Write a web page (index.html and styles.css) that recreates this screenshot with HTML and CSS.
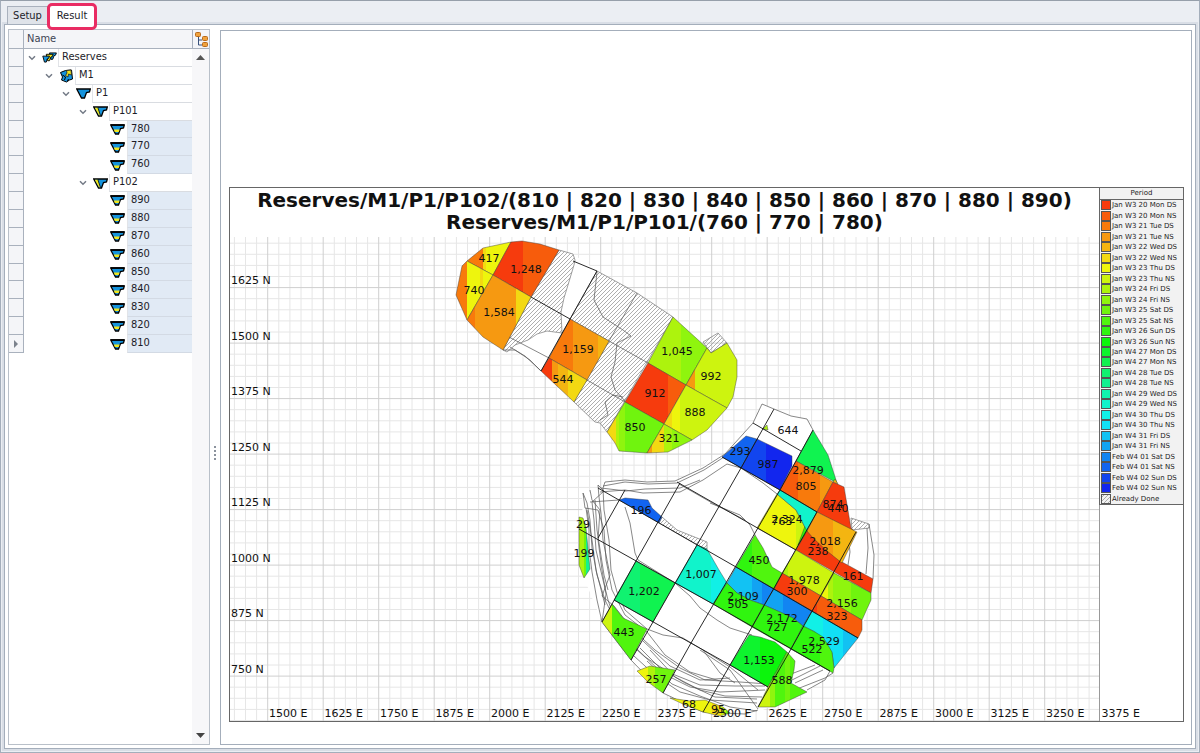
FILE: index.html
```html
<!DOCTYPE html>
<html lang="en">
<head>
<meta charset="utf-8">
<title>Reserves schedule result</title>
<link rel="stylesheet" href="styles.css">
</head>
<body>
<svg class="defs" aria-hidden="true">
  <symbol id="i-group" viewBox="0 0 16 12">
    <path d="M8 1h7.500l-1 2.500-1.500.500-1.500 4H9.500z" fill="#1593dc" stroke="#000"/>
    <path d="M4.500 2.500H12l-1 2.500-1.500.500L8 9.500H6z" fill="#f2e71c" stroke="#000"/>
    <path d="M.700 4.500H8l-1 2.500-1.500.500L4.500 11h-2z" fill="#1593dc" stroke="#000"/>
  </symbol>
  <symbol id="i-mine" viewBox="0 0 14 14">
    <path d="M1 3.500 6 1.500l6-.500 1 9-3 1-3 2-5-2 1-3z" fill="#1593dc" stroke="#000"/>
    <path d="M7 1.500 11.500 1l.500 5-3-1-.500 3L6 6.500 7.500 4z" fill="#f2e71c" stroke="#222" stroke-width=".8"/>
    <path d="M3 6l3 2-1 3M8 12l1-2" fill="none" stroke="#000"/>
  </symbol>
  <symbol id="i-pit" viewBox="0 0 15 11">
    <path d="M.700 1h13.600L13.500 4l-3 .500L8.500 10h-3z" fill="#1593dc" stroke="#000" stroke-width="1.300"/>
  </symbol>
  <symbol id="i-stage" viewBox="0 0 15 11">
    <path d="M.700 1h13.600L13.500 4l-3 .500L8.500 10h-3z" fill="#1593dc" stroke="#000" stroke-width="1.300"/>
    <path d="M1.800 1.700H5l2.200 7.500H6z" fill="#f2e71c"/><path d="M4.800 1.500 7.300 9" stroke="#000" stroke-width=".8"/>
  </symbol>
  <symbol id="i-bench" viewBox="0 0 15 11">
    <path d="M.700 1h13.600L13.500 4l-3 .500L8.500 10h-3z" fill="#1593dc" stroke="#000" stroke-width="1.300"/>
    <path d="M3.800 5.500h5.900l-1 2.500H4.800z" fill="#f2e71c"/><path d="M1 1h13" stroke="#000" stroke-width="1.600"/>
  </symbol>
  <symbol id="i-chev" viewBox="0 0 8 6"><path d="M1 1.200 4 4.200 7 1.200" fill="none" stroke="#737a86" stroke-width="1.500"/></symbol>
</svg>
<div class="window">
  <nav class="tabs" role="tablist">
    <button class="tab" role="tab" aria-selected="false">Setup</button>
    <button class="tab active" role="tab" aria-selected="true">Result</button>
  </nav>
  <main class="page">
    <section class="tree-panel">
      <header class="tree-head">
        <span class="gutter"></span><span class="col-name">Name</span>
        <button class="columns" aria-label="Choose hierarchy">
          <svg width="13" height="15" viewBox="0 0 13 15"><path d="M3.500 5v8H7M3.500 8H7" fill="none" stroke="#39527c"/><g fill="#f0a23c" stroke="#b8691c"><rect x=".5" y=".5" width="5" height="4" rx="1"/><rect x="7.500" y="4.500" width="5" height="4" rx="1"/><rect x="7.500" y="10.500" width="5" height="4" rx="1"/></g></svg>
        </button>
      </header>
      <div class="tree-body">
        <ul class="tree" role="tree">
          <li class="row l0"><span class="gutter"></span><button class="chev" aria-label="Collapse"><svg><use href="#i-chev"/></svg></button><svg class="ico"><use href="#i-group"/></svg><span class="cell">Reserves</span></li>
          <li class="row l1"><span class="gutter"></span><button class="chev" aria-label="Collapse"><svg><use href="#i-chev"/></svg></button><svg class="ico tall"><use href="#i-mine"/></svg><span class="cell">M1</span></li>
          <li class="row l2"><span class="gutter"></span><button class="chev" aria-label="Collapse"><svg><use href="#i-chev"/></svg></button><svg class="ico"><use href="#i-pit"/></svg><span class="cell">P1</span></li>
          <li class="row l3"><span class="gutter"></span><button class="chev" aria-label="Collapse"><svg><use href="#i-chev"/></svg></button><svg class="ico"><use href="#i-stage"/></svg><span class="cell">P101</span></li>
          <li class="row l4"><span class="gutter"></span><svg class="ico"><use href="#i-bench"/></svg><span class="cell">780</span></li>
          <li class="row l4"><span class="gutter"></span><svg class="ico"><use href="#i-bench"/></svg><span class="cell">770</span></li>
          <li class="row l4"><span class="gutter"></span><svg class="ico"><use href="#i-bench"/></svg><span class="cell">760</span></li>
          <li class="row l3"><span class="gutter"></span><button class="chev" aria-label="Collapse"><svg><use href="#i-chev"/></svg></button><svg class="ico"><use href="#i-stage"/></svg><span class="cell">P102</span></li>
          <li class="row l4"><span class="gutter"></span><svg class="ico"><use href="#i-bench"/></svg><span class="cell">890</span></li>
          <li class="row l4"><span class="gutter"></span><svg class="ico"><use href="#i-bench"/></svg><span class="cell">880</span></li>
          <li class="row l4"><span class="gutter"></span><svg class="ico"><use href="#i-bench"/></svg><span class="cell">870</span></li>
          <li class="row l4"><span class="gutter"></span><svg class="ico"><use href="#i-bench"/></svg><span class="cell">860</span></li>
          <li class="row l4"><span class="gutter"></span><svg class="ico"><use href="#i-bench"/></svg><span class="cell">850</span></li>
          <li class="row l4"><span class="gutter"></span><svg class="ico"><use href="#i-bench"/></svg><span class="cell">840</span></li>
          <li class="row l4"><span class="gutter"></span><svg class="ico"><use href="#i-bench"/></svg><span class="cell">830</span></li>
          <li class="row l4"><span class="gutter"></span><svg class="ico"><use href="#i-bench"/></svg><span class="cell">820</span></li>
          <li class="row l4"><span class="gutter"><svg width="4" height="8" viewBox="0 0 4 8"><path d="M0 0l4 4-4 4z" fill="#7b828c"/></svg></span><svg class="ico"><use href="#i-bench"/></svg><span class="cell">810</span></li>
        </ul>
        <div class="scroll">
          <button aria-label="Scroll up"><svg width="9" height="5" viewBox="0 0 9 5"><path d="M0 5l4.500-5L9 5z" fill="#555"/></svg></button>
          <button aria-label="Scroll down"><svg width="9" height="5" viewBox="0 0 9 5"><path d="M0 0l4.500 5L9 0z" fill="#444"/></svg></button>
        </div>
      </div>
    </section>
    <div class="splitter"><i></i><i></i><i></i><i></i></div>
    <section class="chart-panel">
      <div class="chart">
        <h1 class="title"><span>Reserves/M1/P1/P102/(810 | 820 | 830 | 840 | 850 | 860 | 870 | 880 | 890)</span><span>Reserves/M1/P1/P101/(760 | 770 | 780)</span></h1>
        <svg id="map" class="map" viewBox="230 237 953 484" role="img" aria-label="Reserves by period"></svg>
        <aside class="legend"><h2>Period</h2><ul id="legend"></ul></aside>
      </div>
    </section>
  </main>
</div>
<script src="chart.js"></script>
</body>
</html>
```
FILE: styles.css
```css
* { box-sizing: border-box; }
body {
  margin: 0;
  font: 11px/14px "DejaVu Sans Condensed", "Liberation Sans", sans-serif;
  color: #1c1c28;
}
button { margin: 0; padding: 0; border: 0; background: none; font: inherit; color: inherit; }
ul { margin: 0; padding: 0; list-style: none; }
svg { display: block; }
.defs { display: none; }
.window {
  display: flex;
  flex-direction: column;
  height: 100vh;
  padding: 3px;
  background: #ebeef3;
  border: 1px solid #a4aebb;
  border-top-color: #969faa;
}
.tabs { display: flex; align-items: flex-end; height: 20px; padding-left: 3px; position: relative; z-index: 1; }
.tab {
  height: 18px;
  padding: 0 5px;
  width: 41px;
  background: #dfe3e9;
  border: 1px solid #a9b1bd;
  border-bottom: 0;
}
.tab.active {
  width: 50px;
  height: 27px;
  margin: 0 0 -6px -1px;
  padding: 0 0 2px;
  background: #fff;
  border: 3px solid #e92c63;
  border-radius: 5px;
}
.page {
  flex: 1;
  min-height: 0;
  display: flex;
  padding: 4px 3px 3px;
  background: #fff;
  border: 1px solid #a4aebb;
  box-shadow: 0 0 0 2px #d9dee6;
}
.tree-panel { width: 202px; display: flex; flex-direction: column; border: 1px solid #b9c0c9; }
.tree-head { display: flex; height: 19px; background: #f4f5f8; border-bottom: 1px solid #a9b1bd; line-height: 18px; }
.gutter { width: 15px; flex: none; border-right: 1px solid #a9b1bd; background: #f4f5f8; }
.col-name { flex: 1; padding-left: 3px; color: #3c4454; }
.columns { width: 17px; display: grid; place-items: center; border-left: 1px solid #a9b1bd; }
.tree-body { flex: 1; display: flex; }
.tree { flex: 1; display: grid; grid-template-rows: repeat(17, 1fr); height: 304px; }
.row { display: flex; align-items: center; min-height: 0; }
.row .gutter { align-self: stretch; display: grid; place-items: center; border-bottom: 1px solid #a9b1bd; }
.chev { width: 8px; margin-left: 4px; }
.chev svg { width: 8px; height: 6px; }
.ico { width: 15px; height: 11px; margin: 0 1px 0 6px; flex: none; }
.ico.tall { height: 14px; }
.cell { flex: 1; align-self: stretch; padding-left: 3px; line-height: 16px; border-left: 1px solid #e2e4e8; border-bottom: 1px solid #d9dce1; }
.l1 .chev { margin-left: 21px; }
.l2 .chev { margin-left: 38px; }
.l3 .chev { margin-left: 55px; }
.l4 .ico { margin-left: 86px; margin-right: 2px; }
.l4 .cell { background: #e1eaf5; border-bottom-color: #d3dae4; }
.scroll { width: 17px; display: flex; flex-direction: column; justify-content: space-between; padding: 6px 4px; background: #f7f7f9; }
.splitter { width: 10px; display: flex; flex-direction: column; gap: 2px; align-items: center; justify-content: center; padding-top: 132px; }
.splitter i { width: 2px; height: 2px; background: #8b929d; }
.chart-panel { flex: 1; min-width: 0; display: flex; flex-direction: column; justify-content: flex-end; margin-top: 1px; padding: 8px 7px 22px 8px; border: 1px solid #a4aebb; }
.chart { position: relative; border: 1px solid #666; background: #fff; }
.title {
  margin: 0;
  padding: 1px 84px 4px 0;
  text-align: center;
  white-space: nowrap;
  color: #111;
  font: bold 20px/22px "DejaVu Sans", sans-serif;
}
.title span { display: block; }
.map { width: 100%; height: auto; }
.map text { font: 11px "DejaVu Sans", sans-serif; fill: #111; }
.map .value { text-anchor: middle; }
.legend {
  position: absolute;
  top: 0;
  right: 0;
  width: 84px;
  background: #f2f2f2;
  border: 1px solid #666;
  border-width: 0 0 1px 1px;
  font: 7px/10px "DejaVu Sans", sans-serif;
  color: #222;
}
.legend h2 { margin: 0; font: inherit; line-height: 11px; text-align: center; border-bottom: 1px solid #666; }
.legend ul { display: grid; grid-auto-rows: 1fr; height: 304px; }
.legend li { display: flex; align-items: center; gap: 1px; padding-left: 1px; white-space: nowrap; }
.legend svg { width: 10px; height: 10px; flex: none; }
```
FILE: chart.js
```
const C = ['#f63b0d','#f75c0c','#f87a0c','#f69911','#f4b511','#f3d912','#eef50d','#cdf40f','#adf30d','#8ff50e','#70f40e','#50f50e','#30f50f','#0cf50c','#0ef42e','#10f350','#10f270','#10f290','#11f3ae','#11f3cb','#11f0e6','#12e0f5','#12c2f3','#12a3f2','#1285f2','#1264f0','#1245ef','#1226ee'];
const names = ['Jan W3 20 Mon','Jan W3 21 Tue','Jan W3 22 Wed','Jan W3 23 Thu','Jan W3 24 Fri','Jan W3 25 Sat','Jan W3 26 Sun','Jan W4 27 Mon','Jan W4 28 Tue','Jan W4 29 Wed','Jan W4 30 Thu','Jan W4 31 Fri','Feb W4 01 Sat','Feb W4 02 Sun'];
const periods = names.flatMap(n => [n + ' DS', n + ' NS']);

// Each block: outline, then colour bands as [period index, right edge x].
const blocks = [
  ['467,261 483,248 511,242 493,275', [2,483],[5,486],[6,600]],
  ['467,261 462,266 456,295 467,320 493,275', [2,467],[6,480],[5,483],[6,600]],
  ['511,242 522,241 540,244 559,250 531,297 493,275', [0,523],[1,540],[1,600]],
  ['493,275 531,297 503,350 483,337 467,320', [2,475],[3,516],[5,600]],
  ['570,319 609,341 587,380 549,358', [2,573],[3,598],[4,700]],
  ['549,358 587,380 574,402 541,371', [0,552],[3,558],[4,568],[5,700]],
  ['673,317 707,348 686,385 648,363', [8,681],[9,800]],
  ['707,348 711,353 727,343 737,360 737,377 733,397 727,408 686,385', [3,695],[7,800]],
  ['648,363 686,385 664,424 625,402', [0,668],[1,800]],
  ['686,385 727,408 707,430 692,440 664,424', [5,672],[6,680],[7,800]],
  ['625,402 664,424 647,453 619,451 615,443 607,432', [5,616],[8,619],[9,625],[10,700]],
  ['664,424 692,440 668,452 647,453', [3,652],[5,664],[8,672],[9,700]],
  ['767,425 768,430 763,429', [8,900]],
  ['722,457 746,436 757,439 741,468', [25,900]],
  ['757,439 792,456 792,466 780,490 741,468', [26,766],[27,900]],
  ['813,430 828,455 837,483 796,461', [15,900]],
  ['796,461 833,482 817,512 780,490', [1,798],[2,820],[3,900]],
  ['833,482 844,487 851,528 855,532 817,512', [0,900]],
  ['835,479 838,484 833,482', [4,900]],
  ['777,494 796,510 807,531 796,550 757,528', [6,796],[7,900]],
  ['805,526 808,531 798,545', [12,900]],
  ['780,490 817,512 807,531 796,510 777,494', [19,900]],
  ['807,531 842,562 873,579 871,593 796,550', [0,900]],
  ['817,512 857,532 842,563 827,551 813,538 807,531', [3,833],[4,900]],
  ['796,550 834,573 821,596 782,573', [8,788],[7,900]],
  ['834,573 871,593 871,600 862,620 821,596', [6,828],[8,833],[9,851],[10,900]],
  ['782,573 821,596 812,611 774,589', [0,790],[1,900]],
  ['821,596 862,620 862,630 858,638 812,611', [0,817],[1,900]],
  ['755,535 763,548 772,567 782,573 774,589 736,567', [12,752],[11,900]],
  ['697,545 707,549 719,570 727,583 713,604 675,583', [19,711],[20,900]],
  ['736,567 774,589 764,605 750,600 737,593 727,583', [22,752],[23,762],[24,900]],
  ['727,583 737,593 750,600 764,605 752,627 713,604', [12,900]],
  ['774,589 812,611 803,626 793,618 780,612 764,605', [23,783],[24,900]],
  ['764,605 780,612 793,618 803,626 791,649 752,627', [12,780],[12,900]],
  ['812,611 858,638 834,668 832,653 815,632 803,626', [20,823],[21,843],[22,900]],
  ['803,626 815,632 823,637 832,652 834,668 833,673 791,649', [12,820],[11,900]],
  ['749,635 760,637 775,642 787,652 768,687 730,665', [14,760],[13,900]],
  ['787,652 795,661 794,670 791,683 807,692 775,707 758,707 768,687', [7,770],[9,775],[11,785],[10,790],[11,900]],
  ['670,698 690,701 705,700 723,707 730,713 720,716 703,712 683,704', [6,712],[5,721],[7,726],[10,900]],
  ['637,671 650,666 675,670 663,693 648,682', [6,648],[8,655],[10,900]],
  ['612,604 623,618 647,629 631,660 602,622', [7,612],[11,900]],
  ['636,561 675,583 653,622 614,600', [16,640],[15,900]],
  ['579,517 583,518 586,528 590,569 584,578 579,565', [8,584],[10,586],[17,700]],
  ['619,500 625,498 648,500 652,508 662,517 659,523', [25,900]]
];
const white = [
  '467,261 511,242 573,254 597,271 673,317 707,348 648,453 600,420 541,371 510,347 467,320',
  '762,404 791,416 807,419 813,430 837,483 844,487 851,518 869,524 875,560 871,600 858,638 830,674 807,692 758,712 705,711 663,693 631,660 602,622 584,578 582,494 600,490 605,482 676,481 725,454 753,423'
];
const hatched = [
  '559,250 573,254 575,260 574,265 568,285 564,298 561,312 562,333 547,331 537,334 528,340 515,345 507,352 503,350 531,297',
  '597,271 637,293 673,317 607,432 600,423 595,422 574,402 609,341 570,319',
  '703,342 718,333 727,343 711,353',
  '851,518 869,524 869,528 852,530',
  '662,517 677,530 707,542 707,549 697,545 659,523'
];
const heavy = [
  '597,271 541,371','573,261 597,271','531,297 570,319',
  '598,488 736,567 858,638','677,482 796,550','722,457 780,490 817,512',
  '579,529 713,604 830,671','614,600 730,665 768,687','625,490 598,538',
  '680,483 636,561 602,622','774,409 741,468 653,622 631,660','780,490 691,643 663,693',
  '813,430 780,490','817,512 752,627 703,712','856,532 791,649 758,707','753,423 801,451'
];
const contours = [
  '597,272 594,300 603,317 623,330 631,336 617,343 615,362 611,377 615,390 625,401',
  '623,397 613,395 605,402 608,415 600,420','637,293 609,341 648,363','587,380 625,402',
  '503,350 515,350 530,360 541,371','507,336 549,358','510,347 525,356 541,371',
  '605,482 625,480 647,482 675,481 703,468 725,454 753,423 762,404 774,409 791,416 807,419 813,430',
  '603,486 625,482 648,484 677,483 704,470 724,457 740,445',
  '600,492 625,490 643,493 680,492 703,480 727,464 741,468 763,483 777,494',
  '601,488 626,491 645,489 680,488 700,480',
  '605,482 603,488 604,510 609,540 611,570 617,592 625,610 647,629 663,635 683,638 703,650 730,667 758,690',
  '598,485 599,497 601,513 603,540 610,575 602,596 614,606 633,630 655,650 680,668 705,680 740,682 768,684',
  '598,485 604,491 592,502 594,520 596,550 603,580 608,600 620,635 645,657 670,673 700,685 735,686 765,686',
  '590,490 592,500 600,510 598,540 602,570 606,594 602,622',
  '583,493 587,503 590,520 592,548 597,575 605,600 615,620 638,650 662,673 690,687 720,692 765,690',
  '583,493 585,508 598,510 604,530 606,560 612,590 625,615 647,632 665,655 690,672 720,681',
  '586,508 589,530 589,548 592,572 597,600 602,622 631,660 663,693 703,712 745,714 758,710',
  '590,502 619,500','587,510 592,540 596,570 605,605','595,500 597,530 604,575 608,590',
  '640,648 660,668 685,683 715,697 757,699','634,656 656,676 680,692 710,700 757,703','643,641 670,666 700,680 730,678',
  '647,661 672,684 700,696 730,707 757,711','650,650 675,677 700,690 725,696 762,697',
  '625,507 630,523 635,553 638,560 675,583 690,596 700,608 717,620 730,628 752,635',
  '710,503 740,515 750,525 755,535','679,484 714,504 745,520','735,683 720,673 703,650','700,650 730,670 758,709',
  '791,674 815,665','795,683 823,670','797,689 825,678 833,673','792,680 820,666','791,649 830,671 825,680 807,690',
  '848,534 850,552 848,565','867,528 868,548 866,574','869,524 874,555 873,579'
];
const values = '417,489,258 740,474,290 1248,526,269 1584,499,312 1159,578,349 544,563,379 1045,677,351 992,711,376 912,655,393 888,695,412 850,635,427 321,669,438 644,788,430 293,740,451 987,768,464 2879,808,470 805,806,486 874,833,504 440,838,508 2324,787,519 763,782,521 2018,825,541 238,818,551 450,759,560 161,853,576 1978,804,580 300,797,591 2156,842,603 323,837,616 2109,743,596 505,738,604 2172,782,618 727,777,627 2529,824,641 522,812,649 1153,759,660 588,782,680 1007,701,574 1202,644,591 443,624,632 257,656,679 68,689,704 95,718,709 29,583,524 199,584,553 196,641,510'
  .split(' ').map(v => v.split(',').map(Number));

const hatchDef = id => `<pattern id="${id}" width="4" height="4" patternUnits="userSpaceOnUse"><path d="M-1 1 1-1M-1 5 5-1M3 5 5 3" stroke="#999" stroke-width=".8"/></pattern>`;
let defs = hatchDef('hatch'), body = '';
const line = (x1, y1, x2, y2, c) => `<path d="M${x1} ${y1}L${x2} ${y2}" stroke="${c}"/>`;
const STEP = 11.1;
for (const major of [false, true]) {
  const color = major ? '#cfcfcf' : '#e6e6e6';
  for (let i = -3; i < 75; i++) if ((i % 5 === 0) === major) body += line(267.7 + i * STEP, 237, 267.7 + i * STEP, 721, color);
  for (let i = -4; i < 40; i++) if ((i % 5 === 0) === major) body += line(230, 287.6 + i * STEP, 1099, 287.6 + i * STEP, color);
}
body += line(1099.5, 237, 1099.5, 721, '#999');
for (const p of white) body += `<polygon points="${p}" fill="#fff"/>`;
for (const p of hatched) body += `<polygon points="${p}" fill="url(#hatch)" stroke="#888" stroke-width=".8"/>`;
for (const p of contours) body += `<polyline points="${p}" fill="none" stroke="#555" stroke-width=".7"/>`;
blocks.forEach(([points, ...bands], n) => {
  const xs = points.split(' ').map(p => +p.split(',')[0]);
  const x0 = Math.min(...xs), x1 = Math.max(...xs);
  let from = 0, stops = '';
  for (const [period, edge] of bands) {
    const to = Math.min(1, (edge - x0) / (x1 - x0));
    stops += `<stop offset="${from}" stop-color="${C[period]}"/><stop offset="${to}" stop-color="${C[period]}"/>`;
    from = to;
  }
  defs += `<linearGradient id="b${n}">${stops}</linearGradient>`;
  body += `<polygon points="${points}" fill="url(#b${n})" stroke="#333" stroke-opacity=".6" stroke-width=".7"/>`;
});
for (const p of heavy) body += `<polyline points="${p}" fill="none" stroke="#111" stroke-width=".9"/>`;
for (let i = 0; i < 16; i++) body += `<text x="${269 + i * 55.5}" y="717">${1500 + i * 125} E</text>`;
for (let i = 0; i < 8; i++) body += `<text x="231" y="${284 + i * 55.5}">${1625 - i * 125} N</text>`;
for (const [v, x, y] of values) body += `<text class="value" x="${x}" y="${y + 4}">${v.toLocaleString('en-US')}</text>`;
document.getElementById('map').innerHTML = `<defs>${defs}</defs>${body}`;

const swatch = fill => `<svg viewBox="0 0 10 10"><rect x=".5" y=".5" width="9" height="9" fill="${fill}" stroke="#555"/></svg>`;
document.getElementById('legend').innerHTML =
  periods.map((p, i) => `<li>${swatch(C[i])}<span>${p}</span></li>`).join('') +
  `<li>${swatch('url(#hatch)')}<span>Already Done</span></li>`;
```
